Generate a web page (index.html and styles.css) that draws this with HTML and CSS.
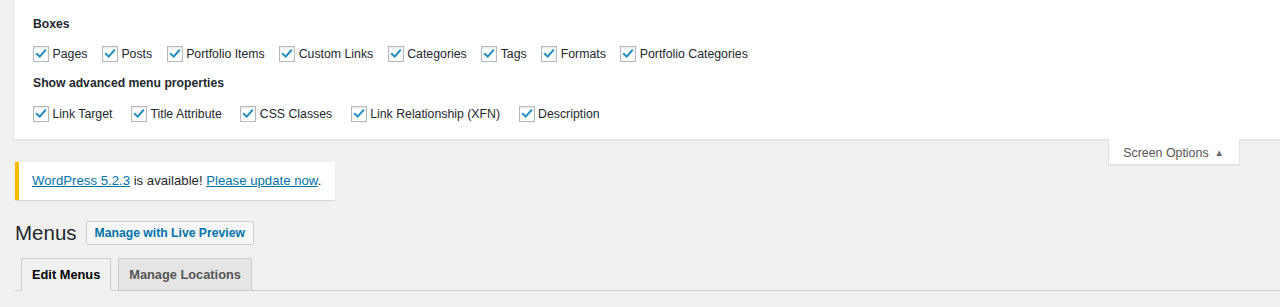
FILE: index.html
```html
<!DOCTYPE html>
<html lang="en">
<head>
<meta charset="utf-8">
<title>Menus</title>
<link rel="stylesheet" href="styles.css">
</head>
<body>
<div class="screen-meta">
  <h5 class="prefs-title">Boxes</h5>
  <div class="prefs-row boxes">
    <label class="pref"><span class="cb"><svg viewBox="0 0 16 16"><polyline points="3.3,7.9 6.6,11 12.7,3.9"/></svg></span>Pages</label>
    <label class="pref"><span class="cb"><svg viewBox="0 0 16 16"><polyline points="3.3,7.9 6.6,11 12.7,3.9"/></svg></span>Posts</label>
    <label class="pref"><span class="cb"><svg viewBox="0 0 16 16"><polyline points="3.3,7.9 6.6,11 12.7,3.9"/></svg></span>Portfolio Items</label>
    <label class="pref"><span class="cb"><svg viewBox="0 0 16 16"><polyline points="3.3,7.9 6.6,11 12.7,3.9"/></svg></span>Custom Links</label>
    <label class="pref"><span class="cb"><svg viewBox="0 0 16 16"><polyline points="3.3,7.9 6.6,11 12.7,3.9"/></svg></span>Categories</label>
    <label class="pref"><span class="cb"><svg viewBox="0 0 16 16"><polyline points="3.3,7.9 6.6,11 12.7,3.9"/></svg></span>Tags</label>
    <label class="pref"><span class="cb"><svg viewBox="0 0 16 16"><polyline points="3.3,7.9 6.6,11 12.7,3.9"/></svg></span>Formats</label>
    <label class="pref"><span class="cb"><svg viewBox="0 0 16 16"><polyline points="3.3,7.9 6.6,11 12.7,3.9"/></svg></span>Portfolio Categories</label>
  </div>
  <h5 class="prefs-title second">Show advanced menu properties</h5>
  <div class="prefs-row advanced">
    <label class="pref"><span class="cb"><svg viewBox="0 0 16 16"><polyline points="3.3,7.9 6.6,11 12.7,3.9"/></svg></span>Link Target</label>
    <label class="pref"><span class="cb"><svg viewBox="0 0 16 16"><polyline points="3.3,7.9 6.6,11 12.7,3.9"/></svg></span>Title Attribute</label>
    <label class="pref"><span class="cb"><svg viewBox="0 0 16 16"><polyline points="3.3,7.9 6.6,11 12.7,3.9"/></svg></span>CSS Classes</label>
    <label class="pref"><span class="cb"><svg viewBox="0 0 16 16"><polyline points="3.3,7.9 6.6,11 12.7,3.9"/></svg></span>Link Relationship (XFN)</label>
    <label class="pref"><span class="cb"><svg viewBox="0 0 16 16"><polyline points="3.3,7.9 6.6,11 12.7,3.9"/></svg></span>Description</label>
  </div>
</div>
<div class="screen-meta-links">
  <button class="show-settings" type="button">Screen Options<span class="arrow">▲</span></button>
</div>
<div class="wrap">
  <div class="update-nag"><a href="#">WordPress 5.2.3</a> is available! <a href="#">Please update now</a>.</div>
  <div class="page-head">
    <h1 class="page-title">Menus</h1>
    <a class="page-title-action" href="#">Manage with Live Preview</a>
  </div>
  <nav class="nav-tab-wrapper">
    <a class="nav-tab active" href="#">Edit Menus</a>
    <a class="nav-tab" href="#">Manage Locations</a>
  </nav>
</div>
</body>
</html>
```
FILE: styles.css
```css
html, body {
  margin: 0;
  padding: 0;
  overflow: hidden;
}
body {
  background: #f1f1f1;
  color: #23282d;
  font-family: "Liberation Sans", Arial, sans-serif;
  font-size: 12.3px;
}

.screen-meta {
  margin: 0 -2px 0 13px;
  background: #fff;
  border-left: 1px solid #e5e5e5;
  border-bottom: 1px solid #e2e2e2;
  box-shadow: 0 1px 1px rgba(0, 0, 0, .04);
  padding: 14px 0 12px 19px;
}
.prefs-title {
  margin: 0;
  font-size: 12.2px;
  font-weight: 700;
  line-height: 21px;
  color: #23282d;
}
.prefs-title.second {
  margin-top: 6px;
}
.prefs-row {
  display: flex;
  height: 26px;
  align-items: center;
  margin-top: 6px;
}
.prefs-row.advanced {
  margin-top: 7px;
}
.pref {
  display: flex;
  align-items: center;
  line-height: 26px;
  margin-right: 14.5px;
  white-space: nowrap;
}
.advanced .pref {
  margin-right: 18.5px;
}
.cb {
  width: 14px;
  height: 14px;
  border: 1px solid #b4b9be;
  background: #fff;
  box-shadow: inset 0 1px 2px rgba(0, 0, 0, .1);
  margin-right: 3.5px;
  display: flex;
  align-items: center;
  justify-content: center;
  flex: none;
}
.cb svg {
  width: 16px;
  height: 16px;
  fill: none;
  stroke: #1e8cbe;
  stroke-width: 2.3;
  stroke-linecap: square;
}

.screen-meta-links {
  float: right;
  margin: -1px 40px 0 0;
}
.show-settings {
  display: flex;
  align-items: center;
  height: 26px;
  padding: 2px 15px 0 14px;
  background: #fff;
  border: 1px solid #e2e2e2;
  border-top: none;
  box-shadow: 0 1px 1px rgba(0, 0, 0, .04);
  font-family: "Liberation Sans", Arial, sans-serif;
  font-size: 12.4px;
  color: #555;
  cursor: pointer;
}
.arrow {
  font-size: 9.5px;
  margin-left: 6px;
  color: #666;
}

.wrap {
  margin: 22px 0 0 15px;
}
.update-nag {
  width: fit-content;
  background: #fff;
  border-left: 4px solid #ffb900;
  box-shadow: 0 1px 1px 0 rgba(0, 0, 0, .1);
  padding: 10px 14px 10px 13px;
  font-size: 13.2px;
  line-height: 18px;
  color: #23282d;
}
.update-nag a {
  color: #0073aa;
  text-decoration: underline;
}

.page-head {
  display: flex;
  align-items: center;
  height: 25px;
  margin-top: 20px;
}
.page-title {
  margin: 0 9px 0 0;
  font-size: 20.5px;
  font-weight: 400;
  line-height: 25px;
  color: #23282d;
}
.page-title-action {
  display: block;
  border: 1px solid #ccc;
  border-radius: 2px;
  background: #f7f7f7;
  padding: 0 8px;
  line-height: 22px;
  font-size: 12.2px;
  font-weight: 700;
  color: #0073aa;
  text-decoration: none;
}

.nav-tab-wrapper {
  display: flex;
  align-items: flex-end;
  margin-top: 13px;
  padding-left: 6px;
  border-bottom: 1px solid #ccc;
}
.nav-tab {
  display: block;
  margin: 0 7px -1px 0;
  padding: 1px 10px 0;
  line-height: 30px;
  border: 1px solid #ccc;
  background: #e5e5e5;
  font-size: 12.8px;
  font-weight: 700;
  color: #555;
  text-decoration: none;
}
.nav-tab.active {
  background: #f1f1f1;
  border-bottom-color: #f1f1f1;
  color: #000;
}
```
